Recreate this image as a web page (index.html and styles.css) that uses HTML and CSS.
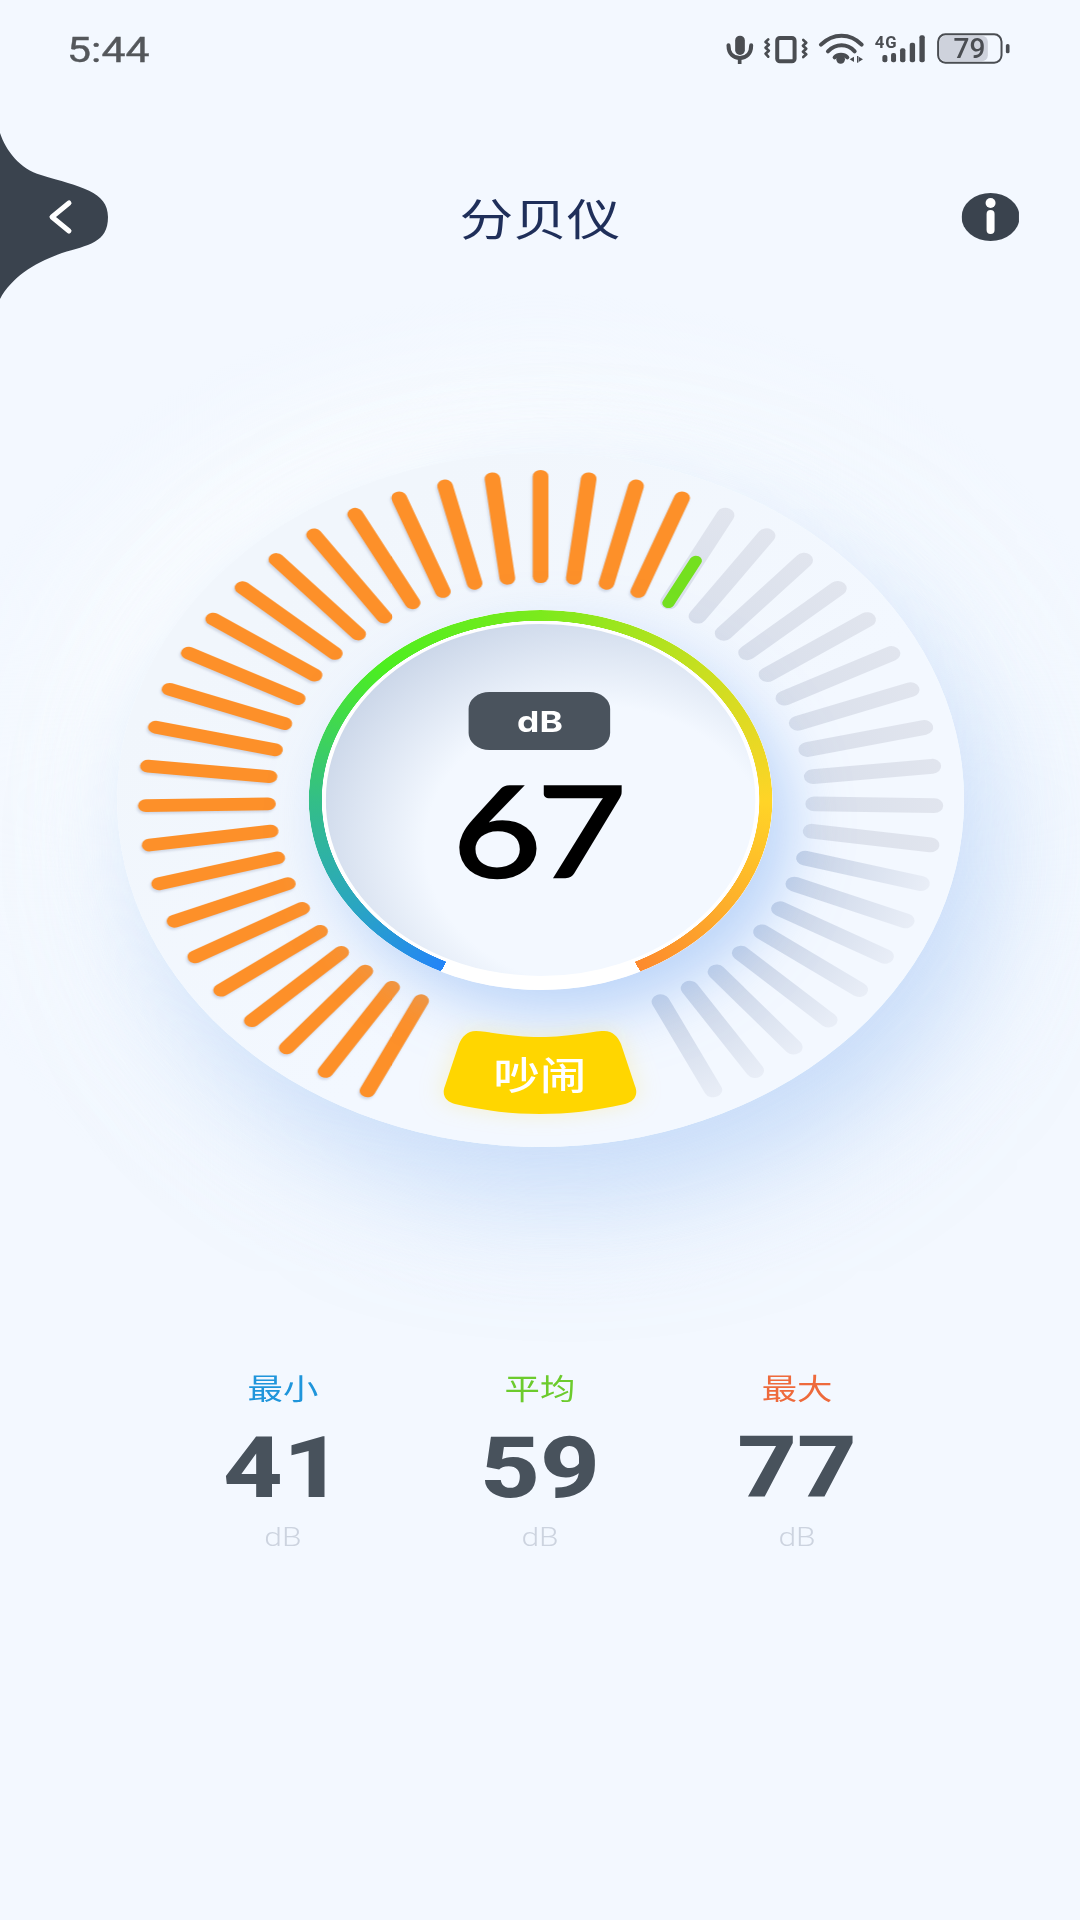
FILE: index.html
```html
<!DOCTYPE html>
<html lang="zh">
<head>
<meta charset="utf-8">
<title>分贝仪</title>
<link rel="stylesheet" href="styles.css">
</head>
<body>
<div class="screen">
  <div class="status">
    <span class="time">5:44</span>
    <svg class="status-icons" viewBox="0 0 1020 180" preserveAspectRatio="none">
      <g class="si-fill">
        <rect x="104" y="47" width="29" height="58" rx="14.5"/>
        <rect x="112" y="112" width="11" height="20"/>
        <circle cx="420" cy="118" r="13"/>
        <path d="M447 118l13-8v16zM474 110l13 8-13 8z"/>
        <rect x="469" y="108" width="4" height="20"/>
        <rect x="545" y="105" width="15" height="22" rx="6"/>
        <rect x="571" y="99" width="15" height="28" rx="6"/>
        <rect x="598" y="85" width="16" height="42" rx="6"/>
        <rect x="627" y="68" width="16" height="59" rx="6"/>
        <rect x="656" y="46" width="16" height="81" rx="6"/>
        <rect x="915" y="72" width="11" height="28" rx="5"/>
        <text class="si-4g" x="522" y="83">4G</text>
      </g>
      <g class="si-line">
        <path d="M84 76c0 26 15 38 34 38s34-12 34-38"/>
        <rect x="230" y="54" width="52" height="70" rx="8"/>
        <path class="si-thin" d="M203 58l-8 8 10 8-10 9 10 9-10 9 8 9M308 60l9 8-10 9 10 9-10 9 10 8-9 8"/>
        <path d="M361 74c36-36 88-36 122 0M382 94c24-24 58-24 80 0M402 112c10-10 28-10 38 0"/>
      </g>
      <rect class="si-batt-fill" x="716" y="47" width="145" height="77" rx="18"/>
      <rect class="si-batt" x="712" y="43" width="190" height="85" rx="22"/>
      <text class="si-79" x="806" y="115">79</text>
    </svg>
  </div>

  <header class="bar">
    <svg class="back" viewBox="0 0 108 168" preserveAspectRatio="none">
      <path class="dark" d="M0 0C6 18 20 36 41 42C80 54 108 58 108 84C108 110 88 112 62 120C34 130 12 144 0 166Z"/>
      <path class="chev" d="M69 70L52 84L69 98"/>
    </svg>
    <h1 class="title">分贝仪</h1>
    <svg class="info" viewBox="0 0 58 48" preserveAspectRatio="none">
      <ellipse class="dark" cx="29" cy="24" rx="29" ry="24"/>
      <ellipse class="white" cx="29" cy="10" rx="5" ry="5"/>
      <rect class="white" x="25" y="17" width="8" height="24" rx="4"/>
    </svg>
  </header>

  <section class="gauge">
    <div class="halo"></div>
    <div class="disc"></div>
    <svg class="ticks" viewBox="-347 -347 694 694">
      <defs>
        <rect id="tick" x="-6.4" y="-330" width="12.8" height="113" rx="6.4"/>
        <rect id="tick-off" x="-7.4" y="-330" width="14.8" height="113" rx="7.4"/>
        <linearGradient id="greyA" x1="0" y1="0" x2="0" y2="1"><stop offset="0" stop-color="#e1e5ee"/><stop offset="1" stop-color="#d9dfeb"/></linearGradient>
        <linearGradient id="greyB" x1="0" y1="0" x2="0" y2="1"><stop offset="0" stop-color="#e9eef7"/><stop offset="1" stop-color="#c8d3e6"/></linearGradient>
      </defs>
      <g class="on">
        <use href="#tick" transform="rotate(-154)"/><use href="#tick" transform="rotate(-147)"/><use href="#tick" transform="rotate(-140)"/><use href="#tick" transform="rotate(-133)"/><use href="#tick" transform="rotate(-126)"/><use href="#tick" transform="rotate(-119)"/><use href="#tick" transform="rotate(-112)"/><use href="#tick" transform="rotate(-105)"/><use href="#tick" transform="rotate(-98)"/><use href="#tick" transform="rotate(-91)"/><use href="#tick" transform="rotate(-84)"/><use href="#tick" transform="rotate(-77)"/><use href="#tick" transform="rotate(-70)"/><use href="#tick" transform="rotate(-63)"/><use href="#tick" transform="rotate(-56)"/><use href="#tick" transform="rotate(-49)"/><use href="#tick" transform="rotate(-42)"/><use href="#tick" transform="rotate(-35)"/><use href="#tick" transform="rotate(-28)"/><use href="#tick" transform="rotate(-21)"/><use href="#tick" transform="rotate(-14)"/><use href="#tick" transform="rotate(-7)"/><use href="#tick"/><use href="#tick" transform="rotate(7)"/><use href="#tick" transform="rotate(14)"/><use href="#tick" transform="rotate(21)"/>
      </g>
      <g class="off-a">
        <use href="#tick-off" transform="rotate(28)"/><use href="#tick-off" transform="rotate(35)"/><use href="#tick-off" transform="rotate(42)"/><use href="#tick-off" transform="rotate(49)"/><use href="#tick-off" transform="rotate(56)"/><use href="#tick-off" transform="rotate(63)"/><use href="#tick-off" transform="rotate(70)"/><use href="#tick-off" transform="rotate(77)"/><use href="#tick-off" transform="rotate(84)"/><use href="#tick-off" transform="rotate(91)"/><use href="#tick-off" transform="rotate(98)"/>
      </g>
      <g class="off-b">
        <use href="#tick-off" transform="rotate(105)"/><use href="#tick-off" transform="rotate(112)"/><use href="#tick-off" transform="rotate(119)"/><use href="#tick-off" transform="rotate(126)"/><use href="#tick-off" transform="rotate(133)"/><use href="#tick-off" transform="rotate(140)"/><use href="#tick-off" transform="rotate(147)"/><use href="#tick-off" transform="rotate(154)"/>
      </g>
      <rect class="level" x="-5" y="-276" width="10" height="58" rx="5" transform="rotate(28)"/>
    </svg>
    <div class="plate"></div>
    <div class="arc"></div>
    <div class="readout">
      <span class="unit">dB</span>
      <span class="value">67</span>
    </div>
    <div class="badge">
      <svg class="badge-bg" viewBox="0 0 194 83" preserveAspectRatio="none">
        <path d="M33 0C45 0 65 6 97 6C129 6 149 0 161 0C170 0 175 6 178 13L192 55C196 65 190 71 182 73C150 80 125 83 97 83C69 83 44 80 12 73C4 71 -2 65 2 55L16 13C19 6 24 0 33 0Z"/>
      </svg>
      <span class="badge-text">吵闹</span>
    </div>
  </section>

  <section class="stats">
    <div class="stat">
      <span class="stat-label min">最小</span>
      <span class="stat-value">41</span>
      <span class="stat-unit">dB</span>
    </div>
    <div class="stat">
      <span class="stat-label avg">平均</span>
      <span class="stat-value">59</span>
      <span class="stat-unit">dB</span>
    </div>
    <div class="stat">
      <span class="stat-label max">最大</span>
      <span class="stat-value">77</span>
      <span class="stat-unit">dB</span>
    </div>
  </section>
</div>
</body>
</html>
```

FILE: styles.css
```css
html, body {
  margin: 0;
  padding: 0;
  width: 1080px;
  height: 1920px;
  overflow: hidden;
  background: #f3f8ff;
}

.screen {
  width: 885px;
  height: 1920px;
  display: flex;
  flex-direction: column;
  transform: scaleX(1.2203);
  transform-origin: 0 0;
  font-family: Roboto, "Noto Sans CJK SC", sans-serif;
  position: relative;
  overflow: hidden;
}

/* status bar */
.status {
  height: 60px;
  margin-top: 20px;
  padding: 0 32px 0 55px;
  display: flex;
  align-items: center;
  justify-content: space-between;
  position: relative;
  z-index: 2;
}

.time {
  font-size: 35px;
  font-weight: 400;
  color: #54575b;
  -webkit-text-stroke: 0.4px #54575b;
}

.status-icons {
  width: 279px;
  height: 60px;
}

.si-fill { fill: #4a4d52; }
.si-line { fill: none; stroke: #4a4d52; stroke-width: 12; stroke-linecap: round; }
.si-thin { stroke-width: 8; stroke-linejoin: round; }
.si-batt { fill: none; stroke: #4a4d52; stroke-width: 6; }
.si-batt-fill { fill: #ced2dc; }
.si-4g { font-family: Roboto, sans-serif; font-size: 50px; font-weight: 700; letter-spacing: 3px; }
.si-79 { font-family: Roboto, sans-serif; font-size: 84px; font-weight: 500; fill: #4a4d52; text-anchor: middle; }

/* header */
.bar {
  margin-top: 53px;
  height: 168px;
  display: grid;
  grid-template-columns: 1fr auto 1fr;
  align-items: center;
  position: relative;
  z-index: 2;
}

.back {
  width: 88.5px;
  height: 168px;
}

.dark { fill: #3a434e; }
.white { fill: #fff; }
.chev { fill: none; stroke: #fff; stroke-width: 5; stroke-linecap: round; stroke-linejoin: round; }

.title {
  margin: 0;
  font-family: "Noto Sans CJK SC", sans-serif;
  font-size: 44px;
  font-weight: 400;
  line-height: 1;
  color: #1f2f5a;
}

.info {
  justify-self: end;
  margin-right: 50px;
  width: 47.5px;
  height: 48px;
}

/* gauge */
.gauge {
  margin: 152px auto 0;
  width: 694px;
  height: 694px;
  display: grid;
  justify-items: center;
  position: relative;
}

.gauge > * { grid-area: 1 / 1; }

.halo {
  position: absolute;
  left: -160px;
  top: -160px;
  width: 1014px;
  height: 1014px;
  border-radius: 50%;
  background: radial-gradient(closest-side, #f7fbff 60%, rgba(247, 251, 255, 0) 100%);
}

.disc {
  width: 694px;
  height: 694px;
  border-radius: 50%;
  background: linear-gradient(135deg, #f1f6fc 20%, #f3f8ff 60%);
  box-shadow: 22px 52px 110px rgba(146, 186, 244, 0.5), -30px -30px 80px rgba(255, 255, 255, 0.7);
  position: relative;
}

.ticks {
  width: 694px;
  height: 694px;
  position: relative;
}

.on { fill: #fd9029; filter: drop-shadow(-1px 2px 1px rgba(110, 125, 160, 0.25)); }
.off-a { fill: url(#greyA); }
.off-b { fill: url(#greyB); }
.level { fill: #74e01f; }

.plate {
  align-self: center;
  width: 380px;
  height: 380px;
  border-radius: 50%;
  box-sizing: border-box;
  border: 14px solid #fff;
  background: radial-gradient(circle at 62% 62%, #f3f8ff 42%, #c8d4e7 75%);
  background-origin: border-box;
  box-shadow: 16px 26px 50px rgba(146, 186, 244, 0.55);
  position: relative;
}

.arc {
  align-self: center;
  width: 380px;
  height: 380px;
  border-radius: 50%;
  background: conic-gradient(from 205.5deg, #2384f8 0deg, #2aa6c0 30deg, #33be88 64deg, #4cee20 110deg, #7bea1c 154deg, #c8df20 200deg, #ffd427 245deg, #fdae2b 280deg, #fd8a2e 309deg, transparent 309deg);
  -webkit-mask: radial-gradient(closest-side, transparent 179px, #000 179.5px);
  mask: radial-gradient(closest-side, transparent 179px, #000 179.5px);
  position: relative;
}

.readout {
  align-self: start;
  margin-top: 239px;
  display: flex;
  flex-direction: column;
  align-items: center;
  position: relative;
}

.unit {
  width: 116px;
  height: 58px;
  border-radius: 17px;
  background: #4a535d;
  color: #fff;
  font-family: Inter, sans-serif;
  font-size: 29px;
  font-weight: 700;
  display: flex;
  align-items: center;
  justify-content: center;
}

.value {
  margin: 14px 0 0 -5px;
  font-family: Lato, sans-serif;
  font-size: 126px;
  font-weight: 400;
  line-height: 130px;
  letter-spacing: -4px;
  color: #000;
  -webkit-text-stroke: 2.5px #000;
}

.badge {
  align-self: end;
  margin-bottom: 33px;
  width: 159px;
  height: 83px;
  display: grid;
  place-items: center;
  position: relative;
}

.badge > * { grid-area: 1 / 1; }

.badge-bg {
  width: 159px;
  height: 83px;
  fill: #ffd600;
  overflow: visible;
  filter: drop-shadow(0 0 10px rgba(255, 225, 60, 0.25));
}

.badge-text {
  position: relative;
  font-family: "Noto Sans CJK SC", sans-serif;
  font-size: 38px;
  font-weight: 500;
  line-height: 1;
  color: #fff;
}

/* stats */
.stats {
  margin: 223px auto 0;
  width: 632px;
  display: grid;
  grid-template-columns: repeat(3, 1fr);
  position: relative;
}

.stat {
  display: flex;
  flex-direction: column;
  align-items: center;
}

.stat-label {
  font-family: "Noto Sans CJK SC", sans-serif;
  font-size: 29px;
  line-height: 34px;
}

.min { color: #1f95db; }
.avg { color: #6ccb2d; }
.max { color: #ee6a3c; }

.stat-value {
  margin-top: 19px;
  font-size: 85px;
  font-weight: 800;
  line-height: 90px;
  color: #48525c;
}

.stat-unit {
  margin-top: 9px;
  font-size: 26px;
  font-weight: 300;
  line-height: 30px;
  color: #ccd3df;
}
```
